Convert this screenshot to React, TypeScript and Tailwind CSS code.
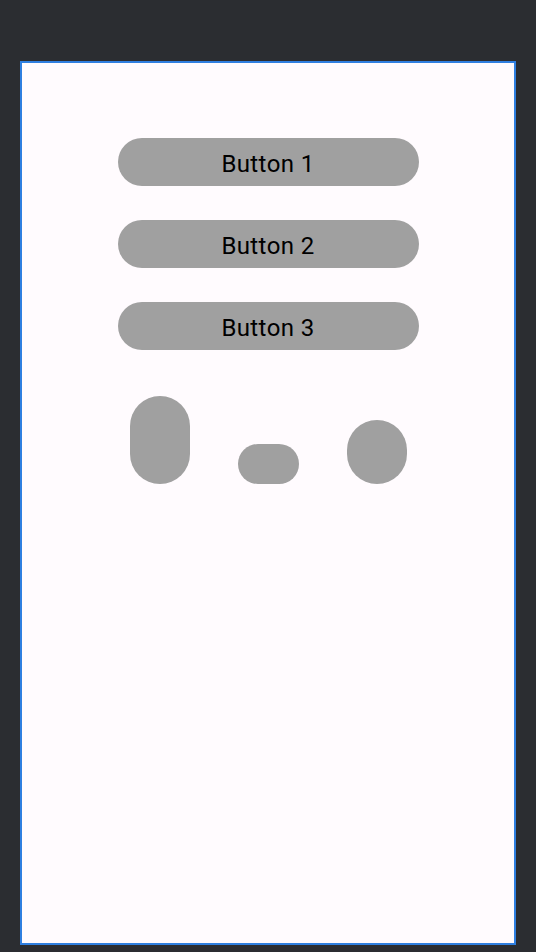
import React from 'react';

const labels = ['Button 1', 'Button 2', 'Button 3'];

export default function App() {
  return (
    <div className="min-h-[952px] bg-[#2b2d31] pt-[61px] px-[20px] pb-[7px]" style={{ fontFamily: 'Roboto, "Liberation Sans", sans-serif' }}>
      <div className="h-[884px] border-2 border-[#2f7fe0] bg-[#fffbfe] flex flex-col items-center pt-[75px]">
        <div className="flex flex-col gap-[34px]">
          {labels.map((l) => (
            <button key={l} className="w-[301px] h-[48px] rounded-full bg-[#a0a0a0] text-black text-[24px] font-normal tracking-[0.4px] flex items-center justify-center pt-[3px]">
              {l}
            </button>
          ))}
        </div>
        <div className="flex items-end gap-[48px] mt-[46px]">
          <div className="w-[60px] h-[88px] rounded-full bg-[#a0a0a0]" />
          <div className="w-[61px] h-[40px] rounded-full bg-[#a0a0a0]" />
          <div className="w-[60px] h-[64px] rounded-full bg-[#a0a0a0]" />
        </div>
      </div>
    </div>
  );
}
